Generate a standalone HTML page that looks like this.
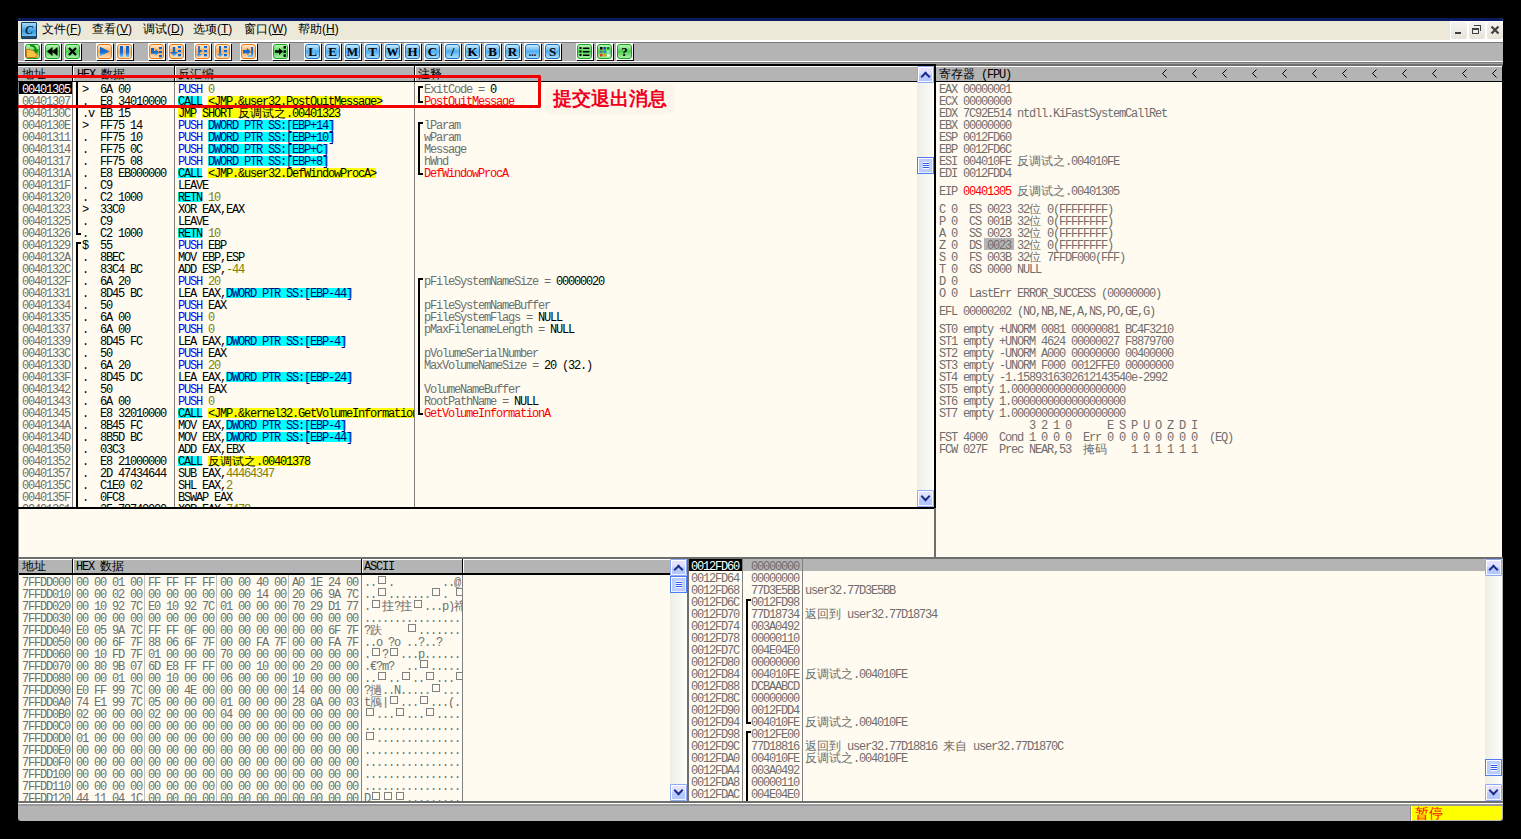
<!DOCTYPE html><html><head><meta charset="utf-8"><style>
html,body{margin:0;padding:0;width:1521px;height:839px;overflow:hidden;background:#000;}
div{position:absolute;box-sizing:content-box;}
.t{position:absolute;font:12px/12px "Liberation Mono",monospace;letter-spacing:-1.2px;white-space:pre;color:#000;}
.t i{font-style:normal;letter-spacing:0;}
.bx{display:inline-block;width:12px;height:8px;position:relative;vertical-align:top;}
.bx::after{content:"";position:absolute;left:2px;top:-1px;width:6px;height:6px;border:1px solid #808080;}
.icon{width:16px;height:17px;border-radius:1px;background:linear-gradient(#A8DCF8,#3A9AE0 55%,#70C0F0 85%,#2A4A6A 88%,#2A4A6A);border:1px solid #0A3C6A;box-sizing:border-box;}
.icon::after{content:"C";position:absolute;left:3px;top:0px;font:italic bold 12px/14px "Liberation Serif";color:#0A2A4A;}
.menu{font:12px/14px "Liberation Sans",sans-serif;color:#000;white-space:pre;}
.wbtn{width:16px;height:17px;background:linear-gradient(#F4F3EE,#E6E4DA);border-radius:2px;}
.wx{font:bold 12px/18px "Liberation Sans";color:#505050;}
.tb{width:17px;height:17px;box-sizing:border-box;border-radius:3px;text-align:center;font:12px/17px "Liberation Sans";color:#000;box-shadow:1px 1px 0 #000, -1px -1px 0 #FFF;}
.tb.g{background:linear-gradient(#9AF09A,#3CC83C 50%,#9AE89A);border:1px solid #28A028;}
.tb.o{background:linear-gradient(#FFE8C8,#FAB070 60%,#FFD8A8);border:1px solid #E88A3A;}
.tb.b{background:linear-gradient(#D0ECFF,#58B4F0 55%,#A8DCFF);border:1px solid #3A8AD0;}
.strack{background:linear-gradient(90deg,#EEEDE5,#FDFDFA);}
.sbtn{width:17px;height:17px;box-sizing:border-box;border:1px solid #8EAAF6;border-radius:1px;box-shadow:inset 1px 1px 0 #FFF,inset -1px -1px 0 #F4F6FF;background:linear-gradient(#E8E6FF,#DCDCFE 45%,#B8CAFB 52%,#B4C6FA);}
.up::after{content:"";position:absolute;left:4px;top:6px;width:5px;height:5px;border-left:2px solid #1C2E8C;border-top:2px solid #1C2E8C;transform:rotate(45deg);}
.dn::after{content:"";position:absolute;left:4px;top:2px;width:5px;height:5px;border-right:2px solid #1C2E8C;border-bottom:2px solid #1C2E8C;transform:rotate(45deg);}
.grip{position:absolute;left:-1px;top:-1px;width:17px;height:17px;box-sizing:border-box;border:1px solid #4C7CF6;background:radial-gradient(#C8D8FE,#B0C6FC);box-shadow:inset 1px 1px 0 #FFF,inset -1px -1px 0 #E8EEFF;}
.grip::after{content:"";position:absolute;left:5px;top:4px;width:6px;height:7px;background:repeating-linear-gradient(#FFFFFF 0 1px,#2E58F0 1px 2px);}
.st{font:14px/14px "Liberation Sans";color:#FF0000;}
.note{font:bold 18.5px/20px "Liberation Sans",sans-serif;color:#F00020;}
</style></head><body>
<div style="left:18px;top:18px;width:1485px;height:803px;background:#B4B4B4;border-radius:3px"></div>
<div style="left:18px;top:18px;width:1485px;height:3px;background:#0A1A60;border-radius:3px 3px 0 0"></div>
<div style="left:18px;top:21px;width:1485px;height:19px;background:#ECE9D8;"></div>
<div style="left:18px;top:40px;width:1485px;height:2px;background:#FFFFFF;"></div>
<div style="left:18px;top:42px;width:1485px;height:1px;background:#7A7A7A;"></div>
<div style="left:18px;top:43px;width:1485px;height:18px;background:#B4B4B4;"></div>
<div style="left:18px;top:61px;width:1485px;height:1px;background:#FFFFFF;"></div>
<div style="left:18px;top:62px;width:1485px;height:1px;background:#7A7A7A;"></div>
<div style="left:18px;top:63px;width:1485px;height:1px;background:#A0A0A0;"></div>
<div style="left:18px;top:64px;width:918px;height:2px;background:#000000;"></div>
<div style="left:936px;top:64px;width:567px;height:2px;background:#707070;"></div>
<div class="icon" style="left:21px;top:22px"></div>
<div class="menu" style="left:42px;top:22px">文件(<u>F</u>)</div>
<div class="menu" style="left:92px;top:22px">查看(<u>V</u>)</div>
<div class="menu" style="left:143px;top:22px">调试(<u>D</u>)</div>
<div class="menu" style="left:193px;top:22px">选项(<u>T</u>)</div>
<div class="menu" style="left:244px;top:22px">窗口(<u>W</u>)</div>
<div class="menu" style="left:298px;top:22px">帮助(<u>H</u>)</div>
<div style="left:1450px;top:21px;width:53px;height:21px;background:#FFFFFF;"></div>
<div class="wbtn" style="left:1451px;top:22px"></div>
<div class="wbtn" style="left:1469px;top:22px"></div>
<div class="wbtn" style="left:1487px;top:22px"></div>
<div style="left:1455px;top:32px;width:6px;height:2px;background:#404040;"></div>
<div style="left:1474px;top:25px;width:7px;height:6px;border-top:1px solid #404040;border-right:1px solid #404040;box-sizing:border-box"></div>
<div style="left:1472px;top:28px;width:7px;height:6px;border:1px solid #404040;border-top-width:2px;box-sizing:border-box;background:#EEEDE5"></div>
<svg style="position:absolute;left:1490px;top:25px" width="10" height="10"><path d="M1.5 1.5L8.5 8.5M8.5 1.5L1.5 8.5" stroke="#404040" stroke-width="2.2"/></svg>
<svg width="0" height="0" style="position:absolute"><defs>
<linearGradient id="gG" x1="0" y1="0" x2="0" y2="1"><stop offset="0" stop-color="#C8F8C8"/><stop offset="0.5" stop-color="#4CD04C"/><stop offset="1" stop-color="#B8F0B8"/></linearGradient>
<linearGradient id="gO" x1="0" y1="0" x2="0" y2="1"><stop offset="0" stop-color="#FFF2E0"/><stop offset="0.5" stop-color="#FFA850"/><stop offset="1" stop-color="#FFE4C4"/></linearGradient>
<linearGradient id="gB" x1="0" y1="0" x2="0" y2="1"><stop offset="0" stop-color="#D8F0FF"/><stop offset="0.5" stop-color="#4EAEF0"/><stop offset="1" stop-color="#B8E2FA"/></linearGradient>
<linearGradient id="bl" x1="0" y1="0" x2="0" y2="1"><stop offset="0" stop-color="#0A5CC0"/><stop offset="0.6" stop-color="#1A70D0"/><stop offset="1" stop-color="#70D0FF"/></linearGradient>
</defs></svg>
<div style="left:24px;top:43px;width:17px;height:17px;background:#FFFFFF;"></div>
<div style="left:41px;top:44px;width:1px;height:17px;background:#000000;"></div>
<div style="left:25px;top:60px;width:17px;height:1px;background:#000000;"></div>
<svg style="position:absolute;left:25px;top:44px" width="15" height="15" viewBox="0 0 15 15"><rect x="0.5" y="0.5" width="14" height="14" rx="2.5" fill="url(#gG)" stroke="#10A810"/><path d="M1.5 5.5h4l1 1h4v1.5h2.5l-1.8 5.5h-9.7z" fill="#F6C040" stroke="#C87010" stroke-width="0.9"/><path d="M5 1.5C8.5 1 10.5 3 11 6.5" stroke="#0C8A0C" stroke-width="2" fill="none"/><path d="M8 5.5L13.8 5.5L11 10z" fill="#0C8A0C"/></svg>
<div style="left:44px;top:43px;width:17px;height:17px;background:#FFFFFF;"></div>
<div style="left:61px;top:44px;width:1px;height:17px;background:#000000;"></div>
<div style="left:45px;top:60px;width:17px;height:1px;background:#000000;"></div>
<svg style="position:absolute;left:45px;top:44px" width="15" height="15" viewBox="0 0 15 15"><rect x="0.5" y="0.5" width="14" height="14" rx="2.5" fill="url(#gG)" stroke="#10A810"/><path d="M7.5 3L2 7.5L7.5 12z M12.5 3L7 7.5L12.5 12z" fill="#000"/></svg>
<div style="left:64px;top:43px;width:17px;height:17px;background:#FFFFFF;"></div>
<div style="left:81px;top:44px;width:1px;height:17px;background:#000000;"></div>
<div style="left:65px;top:60px;width:17px;height:1px;background:#000000;"></div>
<svg style="position:absolute;left:65px;top:44px" width="15" height="15" viewBox="0 0 15 15"><rect x="0.5" y="0.5" width="14" height="14" rx="2.5" fill="url(#gG)" stroke="#10A810"/><path d="M4 4L11 11M11 4L4 11" stroke="#000" stroke-width="2.2"/></svg>
<div style="left:96px;top:43px;width:17px;height:17px;background:#FFFFFF;"></div>
<div style="left:113px;top:44px;width:1px;height:17px;background:#000000;"></div>
<div style="left:97px;top:60px;width:17px;height:1px;background:#000000;"></div>
<svg style="position:absolute;left:97px;top:44px" width="15" height="15" viewBox="0 0 15 15"><rect x="0.5" y="0.5" width="14" height="14" rx="2.5" fill="url(#gO)" stroke="#F07810"/><path d="M3 2.8L3 12.2L12.5 7.5z" fill="url(#bl)"/></svg>
<div style="left:116px;top:43px;width:17px;height:17px;background:#FFFFFF;"></div>
<div style="left:133px;top:44px;width:1px;height:17px;background:#000000;"></div>
<div style="left:117px;top:60px;width:17px;height:1px;background:#000000;"></div>
<svg style="position:absolute;left:117px;top:44px" width="15" height="15" viewBox="0 0 15 15"><rect x="0.5" y="0.5" width="14" height="14" rx="2.5" fill="url(#gO)" stroke="#F07810"/><rect x="3" y="2" width="3" height="11" fill="url(#bl)"/><rect x="9" y="2" width="3" height="11" fill="url(#bl)"/></svg>
<div style="left:148px;top:43px;width:17px;height:17px;background:#FFFFFF;"></div>
<div style="left:165px;top:44px;width:1px;height:17px;background:#000000;"></div>
<div style="left:149px;top:60px;width:17px;height:1px;background:#000000;"></div>
<svg style="position:absolute;left:149px;top:44px" width="15" height="15" viewBox="0 0 15 15"><rect x="0.5" y="0.5" width="14" height="14" rx="2.5" fill="url(#gO)" stroke="#F07810"/><path d="M2 4h3v3h1.5v-2l3.5 3.5l-3.5 3.5v-2h-4.5z" fill="url(#bl)"/><rect x="10" y="3" width="3" height="2.7" fill="url(#bl)"/><rect x="10" y="7" width="3" height="2.7" fill="url(#bl)"/><rect x="10" y="11" width="3" height="2.7" fill="url(#bl)"/></svg>
<div style="left:168px;top:43px;width:17px;height:17px;background:#FFFFFF;"></div>
<div style="left:185px;top:44px;width:1px;height:17px;background:#000000;"></div>
<div style="left:169px;top:60px;width:17px;height:1px;background:#000000;"></div>
<svg style="position:absolute;left:169px;top:44px" width="15" height="15" viewBox="0 0 15 15"><rect x="0.5" y="0.5" width="14" height="14" rx="2.5" fill="url(#gO)" stroke="#F07810"/><path d="M3.8 3h2.4v5h2.8l-4 4.5l-4-4.5h2.8z" fill="url(#bl)"/><rect x="9" y="2" width="3" height="2.5" fill="url(#bl)"/><rect x="9" y="6" width="3" height="2.7" fill="url(#bl)"/><rect x="9" y="10" width="3" height="2.7" fill="url(#bl)"/></svg>
<div style="left:194px;top:43px;width:17px;height:17px;background:#FFFFFF;"></div>
<div style="left:211px;top:44px;width:1px;height:17px;background:#000000;"></div>
<div style="left:195px;top:60px;width:17px;height:1px;background:#000000;"></div>
<svg style="position:absolute;left:195px;top:44px" width="15" height="15" viewBox="0 0 15 15"><rect x="0.5" y="0.5" width="14" height="14" rx="2.5" fill="url(#gO)" stroke="#F07810"/><path d="M3.2 2h1.6v3.5l3 1.6l-3 1.6v1.3h2.2l-3 3.2l-3-3.2h2.2z" fill="url(#bl)"/><rect x="9" y="2" width="3" height="2.5" fill="url(#bl)"/><rect x="9" y="6" width="3" height="2.7" fill="url(#bl)"/><rect x="9" y="10" width="3" height="2.7" fill="url(#bl)"/></svg>
<div style="left:214px;top:43px;width:17px;height:17px;background:#FFFFFF;"></div>
<div style="left:231px;top:44px;width:1px;height:17px;background:#000000;"></div>
<div style="left:215px;top:60px;width:17px;height:1px;background:#000000;"></div>
<svg style="position:absolute;left:215px;top:44px" width="15" height="15" viewBox="0 0 15 15"><rect x="0.5" y="0.5" width="14" height="14" rx="2.5" fill="url(#gO)" stroke="#F07810"/><path d="M4 2h2v8h2l-3 3.3l-3-3.3h2z" fill="url(#bl)"/><rect x="9" y="2" width="3" height="2.5" fill="url(#bl)"/><rect x="9" y="6" width="3" height="2.7" fill="url(#bl)"/><rect x="9" y="10" width="3" height="2.7" fill="url(#bl)"/></svg>
<div style="left:240px;top:43px;width:17px;height:17px;background:#FFFFFF;"></div>
<div style="left:257px;top:44px;width:1px;height:17px;background:#000000;"></div>
<div style="left:241px;top:60px;width:17px;height:1px;background:#000000;"></div>
<svg style="position:absolute;left:241px;top:44px" width="15" height="15" viewBox="0 0 15 15"><rect x="0.5" y="0.5" width="14" height="14" rx="2.5" fill="url(#gO)" stroke="#F07810"/><path d="M2 6h4v-2l3.8 3.8l-3.8 3.8v-2h-4z" fill="url(#bl)"/><path d="M10.2 3h1.8v10h-5v-1.8h3.2z" fill="url(#bl)"/></svg>
<div style="left:272px;top:43px;width:17px;height:17px;background:#FFFFFF;"></div>
<div style="left:289px;top:44px;width:1px;height:17px;background:#000000;"></div>
<div style="left:273px;top:60px;width:17px;height:1px;background:#000000;"></div>
<svg style="position:absolute;left:273px;top:44px" width="15" height="15" viewBox="0 0 15 15"><rect x="0.5" y="0.5" width="14" height="14" rx="2.5" fill="url(#gG)" stroke="#10A810"/><path d="M2 6.2h4v-2.2l4 3.5l-4 3.5v-2.2h-4z" fill="#000"/><rect x="10.5" y="2" width="2.4" height="2.6" fill="#000"/><rect x="10.5" y="6.3" width="2.4" height="2.6" fill="#000"/><rect x="10.5" y="10.3" width="2.4" height="2.6" fill="#000"/></svg>
<div style="left:304px;top:43px;width:17px;height:17px;background:#FFFFFF;"></div>
<div style="left:321px;top:44px;width:1px;height:17px;background:#000000;"></div>
<div style="left:305px;top:60px;width:17px;height:1px;background:#000000;"></div>
<svg style="position:absolute;left:305px;top:44px" width="15" height="15" viewBox="0 0 15 15"><rect x="0.5" y="0.5" width="14" height="14" rx="2.5" fill="url(#gB)" stroke="#1670C8"/><text x="7.5" y="12" text-anchor="middle" font-family="Liberation Serif" font-weight="bold" font-size="13" fill="#000">L</text></svg>
<div style="left:324px;top:43px;width:17px;height:17px;background:#FFFFFF;"></div>
<div style="left:341px;top:44px;width:1px;height:17px;background:#000000;"></div>
<div style="left:325px;top:60px;width:17px;height:1px;background:#000000;"></div>
<svg style="position:absolute;left:325px;top:44px" width="15" height="15" viewBox="0 0 15 15"><rect x="0.5" y="0.5" width="14" height="14" rx="2.5" fill="url(#gB)" stroke="#1670C8"/><text x="7.5" y="12" text-anchor="middle" font-family="Liberation Serif" font-weight="bold" font-size="13" fill="#000">E</text></svg>
<div style="left:344px;top:43px;width:17px;height:17px;background:#FFFFFF;"></div>
<div style="left:361px;top:44px;width:1px;height:17px;background:#000000;"></div>
<div style="left:345px;top:60px;width:17px;height:1px;background:#000000;"></div>
<svg style="position:absolute;left:345px;top:44px" width="15" height="15" viewBox="0 0 15 15"><rect x="0.5" y="0.5" width="14" height="14" rx="2.5" fill="url(#gB)" stroke="#1670C8"/><text x="7.5" y="12" text-anchor="middle" font-family="Liberation Serif" font-weight="bold" font-size="12" fill="#000">M</text></svg>
<div style="left:364px;top:43px;width:17px;height:17px;background:#FFFFFF;"></div>
<div style="left:381px;top:44px;width:1px;height:17px;background:#000000;"></div>
<div style="left:365px;top:60px;width:17px;height:1px;background:#000000;"></div>
<svg style="position:absolute;left:365px;top:44px" width="15" height="15" viewBox="0 0 15 15"><rect x="0.5" y="0.5" width="14" height="14" rx="2.5" fill="url(#gB)" stroke="#1670C8"/><text x="7.5" y="12" text-anchor="middle" font-family="Liberation Serif" font-weight="bold" font-size="13" fill="#000">T</text></svg>
<div style="left:384px;top:43px;width:17px;height:17px;background:#FFFFFF;"></div>
<div style="left:401px;top:44px;width:1px;height:17px;background:#000000;"></div>
<div style="left:385px;top:60px;width:17px;height:1px;background:#000000;"></div>
<svg style="position:absolute;left:385px;top:44px" width="15" height="15" viewBox="0 0 15 15"><rect x="0.5" y="0.5" width="14" height="14" rx="2.5" fill="url(#gB)" stroke="#1670C8"/><text x="7.5" y="12" text-anchor="middle" font-family="Liberation Serif" font-weight="bold" font-size="12" fill="#000">W</text></svg>
<div style="left:404px;top:43px;width:17px;height:17px;background:#FFFFFF;"></div>
<div style="left:421px;top:44px;width:1px;height:17px;background:#000000;"></div>
<div style="left:405px;top:60px;width:17px;height:1px;background:#000000;"></div>
<svg style="position:absolute;left:405px;top:44px" width="15" height="15" viewBox="0 0 15 15"><rect x="0.5" y="0.5" width="14" height="14" rx="2.5" fill="url(#gB)" stroke="#1670C8"/><text x="7.5" y="12" text-anchor="middle" font-family="Liberation Serif" font-weight="bold" font-size="13" fill="#000">H</text></svg>
<div style="left:424px;top:43px;width:17px;height:17px;background:#FFFFFF;"></div>
<div style="left:441px;top:44px;width:1px;height:17px;background:#000000;"></div>
<div style="left:425px;top:60px;width:17px;height:1px;background:#000000;"></div>
<svg style="position:absolute;left:425px;top:44px" width="15" height="15" viewBox="0 0 15 15"><rect x="0.5" y="0.5" width="14" height="14" rx="2.5" fill="url(#gB)" stroke="#1670C8"/><text x="7.5" y="12" text-anchor="middle" font-family="Liberation Serif" font-weight="bold" font-size="13" fill="#000">C</text></svg>
<div style="left:444px;top:43px;width:17px;height:17px;background:#FFFFFF;"></div>
<div style="left:461px;top:44px;width:1px;height:17px;background:#000000;"></div>
<div style="left:445px;top:60px;width:17px;height:1px;background:#000000;"></div>
<svg style="position:absolute;left:445px;top:44px" width="15" height="15" viewBox="0 0 15 15"><rect x="0.5" y="0.5" width="14" height="14" rx="2.5" fill="url(#gB)" stroke="#1670C8"/><text x="7.5" y="12" text-anchor="middle" font-family="Liberation Serif" font-weight="bold" font-size="13" fill="#000">/</text></svg>
<div style="left:464px;top:43px;width:17px;height:17px;background:#FFFFFF;"></div>
<div style="left:481px;top:44px;width:1px;height:17px;background:#000000;"></div>
<div style="left:465px;top:60px;width:17px;height:1px;background:#000000;"></div>
<svg style="position:absolute;left:465px;top:44px" width="15" height="15" viewBox="0 0 15 15"><rect x="0.5" y="0.5" width="14" height="14" rx="2.5" fill="url(#gB)" stroke="#1670C8"/><text x="7.5" y="12" text-anchor="middle" font-family="Liberation Serif" font-weight="bold" font-size="13" fill="#000">K</text></svg>
<div style="left:484px;top:43px;width:17px;height:17px;background:#FFFFFF;"></div>
<div style="left:501px;top:44px;width:1px;height:17px;background:#000000;"></div>
<div style="left:485px;top:60px;width:17px;height:1px;background:#000000;"></div>
<svg style="position:absolute;left:485px;top:44px" width="15" height="15" viewBox="0 0 15 15"><rect x="0.5" y="0.5" width="14" height="14" rx="2.5" fill="url(#gB)" stroke="#1670C8"/><text x="7.5" y="12" text-anchor="middle" font-family="Liberation Serif" font-weight="bold" font-size="13" fill="#000">B</text></svg>
<div style="left:504px;top:43px;width:17px;height:17px;background:#FFFFFF;"></div>
<div style="left:521px;top:44px;width:1px;height:17px;background:#000000;"></div>
<div style="left:505px;top:60px;width:17px;height:1px;background:#000000;"></div>
<svg style="position:absolute;left:505px;top:44px" width="15" height="15" viewBox="0 0 15 15"><rect x="0.5" y="0.5" width="14" height="14" rx="2.5" fill="url(#gB)" stroke="#1670C8"/><text x="7.5" y="12" text-anchor="middle" font-family="Liberation Serif" font-weight="bold" font-size="13" fill="#000">R</text></svg>
<div style="left:524px;top:43px;width:17px;height:17px;background:#FFFFFF;"></div>
<div style="left:541px;top:44px;width:1px;height:17px;background:#000000;"></div>
<div style="left:525px;top:60px;width:17px;height:1px;background:#000000;"></div>
<svg style="position:absolute;left:525px;top:44px" width="15" height="15" viewBox="0 0 15 15"><rect x="0.5" y="0.5" width="14" height="14" rx="2.5" fill="url(#gB)" stroke="#1670C8"/><text x="7.5" y="12" text-anchor="middle" font-family="Liberation Serif" font-weight="bold" font-size="10" fill="#000">...</text></svg>
<div style="left:544px;top:43px;width:17px;height:17px;background:#FFFFFF;"></div>
<div style="left:561px;top:44px;width:1px;height:17px;background:#000000;"></div>
<div style="left:545px;top:60px;width:17px;height:1px;background:#000000;"></div>
<svg style="position:absolute;left:545px;top:44px" width="15" height="15" viewBox="0 0 15 15"><rect x="0.5" y="0.5" width="14" height="14" rx="2.5" fill="url(#gB)" stroke="#1670C8"/><text x="7.5" y="12" text-anchor="middle" font-family="Liberation Serif" font-weight="bold" font-size="13" fill="#000">S</text></svg>
<div style="left:576px;top:43px;width:17px;height:17px;background:#FFFFFF;"></div>
<div style="left:593px;top:44px;width:1px;height:17px;background:#000000;"></div>
<div style="left:577px;top:60px;width:17px;height:1px;background:#000000;"></div>
<svg style="position:absolute;left:577px;top:44px" width="15" height="15" viewBox="0 0 15 15"><rect x="0.5" y="0.5" width="14" height="14" rx="2.5" fill="url(#gG)" stroke="#10A810"/><rect x="2.5" y="3" width="2" height="2" fill="#000"/><rect x="2.5" y="6.5" width="2" height="2" fill="#000"/><rect x="2.5" y="10" width="2" height="2" fill="#000"/><rect x="6" y="3.5" width="6.5" height="1.5" fill="#000"/><rect x="6" y="7" width="6.5" height="1.5" fill="#000"/><rect x="6" y="10.5" width="6.5" height="1.5" fill="#000"/></svg>
<div style="left:596px;top:43px;width:17px;height:17px;background:#FFFFFF;"></div>
<div style="left:613px;top:44px;width:1px;height:17px;background:#000000;"></div>
<div style="left:597px;top:60px;width:17px;height:1px;background:#000000;"></div>
<svg style="position:absolute;left:597px;top:44px" width="15" height="15" viewBox="0 0 15 15"><rect x="0.5" y="0.5" width="14" height="14" rx="2.5" fill="url(#gG)" stroke="#10A810"/><rect x="3.0" y="3.0" width="2.5" height="2.5" fill="#000000"/><rect x="6.5" y="3.0" width="2.5" height="2.5" fill="#1040C0"/><rect x="10.0" y="3.0" width="2.5" height="2.5" fill="#108010"/><rect x="3.0" y="6.5" width="2.5" height="2.5" fill="#707070"/><rect x="6.5" y="6.5" width="2.5" height="2.5" fill="#2080F0"/><rect x="10.0" y="6.5" width="2.5" height="2.5" fill="#A0E0FF"/><rect x="3.0" y="10.0" width="2.5" height="2.5" fill="#F03010"/><rect x="6.5" y="10.0" width="2.5" height="2.5" fill="#F09010"/><rect x="10.0" y="10.0" width="2.5" height="2.5" fill="#FFFFFF"/></svg>
<div style="left:616px;top:43px;width:17px;height:17px;background:#FFFFFF;"></div>
<div style="left:633px;top:44px;width:1px;height:17px;background:#000000;"></div>
<div style="left:617px;top:60px;width:17px;height:1px;background:#000000;"></div>
<svg style="position:absolute;left:617px;top:44px" width="15" height="15" viewBox="0 0 15 15"><rect x="0.5" y="0.5" width="14" height="14" rx="2.5" fill="url(#gG)" stroke="#10A810"/><text x="7.5" y="12" text-anchor="middle" font-family="Liberation Serif" font-weight="bold" font-size="13" fill="#000">?</text></svg>
<div style="left:18px;top:66px;width:916px;height:441px;background:#FFFBF0;"></div>
<div style="left:18px;top:66px;width:899px;height:1px;background:#FFFFFF;"></div>
<div style="left:18px;top:67px;width:899px;height:14px;background:#B4B4B4;"></div>
<div style="left:18px;top:81px;width:899px;height:1px;background:#000000;"></div>
<div style="left:72px;top:66px;width:1px;height:16px;background:#000000;"></div>
<div style="left:73px;top:66px;width:1px;height:15px;background:#FFFFFF;"></div>
<div style="left:174px;top:66px;width:1px;height:16px;background:#000000;"></div>
<div style="left:175px;top:66px;width:1px;height:15px;background:#FFFFFF;"></div>
<div style="left:414px;top:66px;width:1px;height:16px;background:#000000;"></div>
<div style="left:415px;top:66px;width:1px;height:15px;background:#FFFFFF;"></div>
<div class="t" style="left:22px;top:69px;"><i>地址</i></div>
<div class="t" style="left:77px;top:69px;">HEX <i>数据</i></div>
<div class="t" style="left:178px;top:69px;"><i>反汇编</i></div>
<div class="t" style="left:418px;top:69px;"><i>注释</i></div>
<div style="left:72px;top:82px;width:1px;height:425px;background:#808080;"></div>
<div style="left:174px;top:82px;width:1px;height:425px;background:#808080;"></div>
<div style="left:414px;top:82px;width:1px;height:425px;background:#808080;"></div>
<div style="left:18px;top:82px;width:1px;height:425px;background:#808080;"></div>
<div style="left:19px;top:82px;width:898px;height:425px;overflow:hidden">
<div style="left:0px;top:0px;width:53px;height:12px;background:#000"></div>
<div class="t" style="left:3px;top:2px;color:#FFFFFF;">00401305</div>
<div class="t" style="left:63px;top:2px;">&gt;  6A 00</div>
<div style="left:156px;top:2px;width:239px;height:12px;overflow:hidden;position:absolute">
<div class="t" style="left:3px;top:0px;"><span style="color:#0000FF">PUSH</span> <span style="color:#808000">0</span></div>
</div>
<div class="t" style="left:405px;top:2px;"><span style="color:#6E6E6E">ExitCode = </span>0</div>
<div class="t" style="left:3px;top:14px;color:#6E6E6E;">00401307</div>
<div class="t" style="left:63px;top:14px;">.  E8 34010000</div>
<div style="left:156px;top:14px;width:239px;height:12px;overflow:hidden;position:absolute">
<div class="t" style="left:3px;top:0px;"><span style="background:#00FFFF;display:inline-block;vertical-align:top;position:relative;top:-2px;padding-top:2px;height:10px">CALL</span> <span style="background:#FFFF00;display:inline-block;vertical-align:top;position:relative;top:-2px;padding-top:2px;height:10px">&lt;JMP.&amp;user32.PostQuitMessage&gt;</span></div>
</div>
<div class="t" style="left:405px;top:14px;"><span style="color:#FF0000">PostQuitMessage</span></div>
<div class="t" style="left:3px;top:26px;color:#6E6E6E;">0040130C</div>
<div class="t" style="left:63px;top:26px;">.v EB 15</div>
<div style="left:156px;top:26px;width:239px;height:12px;overflow:hidden;position:absolute">
<div class="t" style="left:3px;top:0px;"><span style="background:#FFFF00;display:inline-block;vertical-align:top;position:relative;top:-2px;padding-top:2px;height:10px">JMP</span> <span style="background:#FFFF00;display:inline-block;vertical-align:top;position:relative;top:-2px;padding-top:2px;height:10px">SHORT <i>反调试之</i>.00401323</span></div>
</div>
<div class="t" style="left:3px;top:38px;color:#6E6E6E;">0040130E</div>
<div class="t" style="left:63px;top:38px;">&gt;  FF75 14</div>
<div style="left:156px;top:38px;width:239px;height:12px;overflow:hidden;position:absolute">
<div class="t" style="left:3px;top:0px;"><span style="color:#0000FF">PUSH</span> <span style="color:#000080;background:#00FFFF;display:inline-block;vertical-align:top;position:relative;top:-2px;padding-top:2px;height:10px">DWORD PTR SS:[EBP+14]</span></div>
</div>
<div class="t" style="left:405px;top:38px;"><span style="color:#6E6E6E">lParam</span></div>
<div class="t" style="left:3px;top:50px;color:#6E6E6E;">00401311</div>
<div class="t" style="left:63px;top:50px;">.  FF75 10</div>
<div style="left:156px;top:50px;width:239px;height:12px;overflow:hidden;position:absolute">
<div class="t" style="left:3px;top:0px;"><span style="color:#0000FF">PUSH</span> <span style="color:#000080;background:#00FFFF;display:inline-block;vertical-align:top;position:relative;top:-2px;padding-top:2px;height:10px">DWORD PTR SS:[EBP+10]</span></div>
</div>
<div class="t" style="left:405px;top:50px;"><span style="color:#6E6E6E">wParam</span></div>
<div class="t" style="left:3px;top:62px;color:#6E6E6E;">00401314</div>
<div class="t" style="left:63px;top:62px;">.  FF75 0C</div>
<div style="left:156px;top:62px;width:239px;height:12px;overflow:hidden;position:absolute">
<div class="t" style="left:3px;top:0px;"><span style="color:#0000FF">PUSH</span> <span style="color:#000080;background:#00FFFF;display:inline-block;vertical-align:top;position:relative;top:-2px;padding-top:2px;height:10px">DWORD PTR SS:[EBP+C]</span></div>
</div>
<div class="t" style="left:405px;top:62px;"><span style="color:#6E6E6E">Message</span></div>
<div class="t" style="left:3px;top:74px;color:#6E6E6E;">00401317</div>
<div class="t" style="left:63px;top:74px;">.  FF75 08</div>
<div style="left:156px;top:74px;width:239px;height:12px;overflow:hidden;position:absolute">
<div class="t" style="left:3px;top:0px;"><span style="color:#0000FF">PUSH</span> <span style="color:#000080;background:#00FFFF;display:inline-block;vertical-align:top;position:relative;top:-2px;padding-top:2px;height:10px">DWORD PTR SS:[EBP+8]</span></div>
</div>
<div class="t" style="left:405px;top:74px;"><span style="color:#6E6E6E">hWnd</span></div>
<div class="t" style="left:3px;top:86px;color:#6E6E6E;">0040131A</div>
<div class="t" style="left:63px;top:86px;">.  E8 EB000000</div>
<div style="left:156px;top:86px;width:239px;height:12px;overflow:hidden;position:absolute">
<div class="t" style="left:3px;top:0px;"><span style="background:#00FFFF;display:inline-block;vertical-align:top;position:relative;top:-2px;padding-top:2px;height:10px">CALL</span> <span style="background:#FFFF00;display:inline-block;vertical-align:top;position:relative;top:-2px;padding-top:2px;height:10px">&lt;JMP.&amp;user32.DefWindowProcA&gt;</span></div>
</div>
<div class="t" style="left:405px;top:86px;"><span style="color:#FF0000">DefWindowProcA</span></div>
<div class="t" style="left:3px;top:98px;color:#6E6E6E;">0040131F</div>
<div class="t" style="left:63px;top:98px;">.  C9</div>
<div style="left:156px;top:98px;width:239px;height:12px;overflow:hidden;position:absolute">
<div class="t" style="left:3px;top:0px;">LEAVE</div>
</div>
<div class="t" style="left:3px;top:110px;color:#6E6E6E;">00401320</div>
<div class="t" style="left:63px;top:110px;">.  C2 1000</div>
<div style="left:156px;top:110px;width:239px;height:12px;overflow:hidden;position:absolute">
<div class="t" style="left:3px;top:0px;"><span style="background:#00FFFF;display:inline-block;vertical-align:top;position:relative;top:-2px;padding-top:2px;height:10px">RETN</span> <span style="color:#808000">10</span></div>
</div>
<div class="t" style="left:3px;top:122px;color:#6E6E6E;">00401323</div>
<div class="t" style="left:63px;top:122px;">&gt;  33C0</div>
<div style="left:156px;top:122px;width:239px;height:12px;overflow:hidden;position:absolute">
<div class="t" style="left:3px;top:0px;">XOR EAX,EAX</div>
</div>
<div class="t" style="left:3px;top:134px;color:#6E6E6E;">00401325</div>
<div class="t" style="left:63px;top:134px;">.  C9</div>
<div style="left:156px;top:134px;width:239px;height:12px;overflow:hidden;position:absolute">
<div class="t" style="left:3px;top:0px;">LEAVE</div>
</div>
<div class="t" style="left:3px;top:146px;color:#6E6E6E;">00401326</div>
<div class="t" style="left:63px;top:146px;">.  C2 1000</div>
<div style="left:156px;top:146px;width:239px;height:12px;overflow:hidden;position:absolute">
<div class="t" style="left:3px;top:0px;"><span style="background:#00FFFF;display:inline-block;vertical-align:top;position:relative;top:-2px;padding-top:2px;height:10px">RETN</span> <span style="color:#808000">10</span></div>
</div>
<div class="t" style="left:3px;top:158px;color:#6E6E6E;">00401329</div>
<div class="t" style="left:63px;top:158px;">$  55</div>
<div style="left:156px;top:158px;width:239px;height:12px;overflow:hidden;position:absolute">
<div class="t" style="left:3px;top:0px;"><span style="color:#0000FF">PUSH</span> EBP</div>
</div>
<div class="t" style="left:3px;top:170px;color:#6E6E6E;">0040132A</div>
<div class="t" style="left:63px;top:170px;">.  8BEC</div>
<div style="left:156px;top:170px;width:239px;height:12px;overflow:hidden;position:absolute">
<div class="t" style="left:3px;top:0px;">MOV EBP,ESP</div>
</div>
<div class="t" style="left:3px;top:182px;color:#6E6E6E;">0040132C</div>
<div class="t" style="left:63px;top:182px;">.  83C4 BC</div>
<div style="left:156px;top:182px;width:239px;height:12px;overflow:hidden;position:absolute">
<div class="t" style="left:3px;top:0px;">ADD ESP,<span style="color:#808000">-44</span></div>
</div>
<div class="t" style="left:3px;top:194px;color:#6E6E6E;">0040132F</div>
<div class="t" style="left:63px;top:194px;">.  6A 20</div>
<div style="left:156px;top:194px;width:239px;height:12px;overflow:hidden;position:absolute">
<div class="t" style="left:3px;top:0px;"><span style="color:#0000FF">PUSH</span> <span style="color:#808000">20</span></div>
</div>
<div class="t" style="left:405px;top:194px;"><span style="color:#6E6E6E">pFileSystemNameSize = </span>00000020</div>
<div class="t" style="left:3px;top:206px;color:#6E6E6E;">00401331</div>
<div class="t" style="left:63px;top:206px;">.  8D45 BC</div>
<div style="left:156px;top:206px;width:239px;height:12px;overflow:hidden;position:absolute">
<div class="t" style="left:3px;top:0px;">LEA EAX,<span style="color:#000080;background:#00FFFF;display:inline-block;vertical-align:top;position:relative;top:-2px;padding-top:2px;height:10px">DWORD PTR SS:[EBP-44]</span></div>
</div>
<div class="t" style="left:3px;top:218px;color:#6E6E6E;">00401334</div>
<div class="t" style="left:63px;top:218px;">.  50</div>
<div style="left:156px;top:218px;width:239px;height:12px;overflow:hidden;position:absolute">
<div class="t" style="left:3px;top:0px;"><span style="color:#0000FF">PUSH</span> EAX</div>
</div>
<div class="t" style="left:405px;top:218px;"><span style="color:#6E6E6E">pFileSystemNameBuffer</span></div>
<div class="t" style="left:3px;top:230px;color:#6E6E6E;">00401335</div>
<div class="t" style="left:63px;top:230px;">.  6A 00</div>
<div style="left:156px;top:230px;width:239px;height:12px;overflow:hidden;position:absolute">
<div class="t" style="left:3px;top:0px;"><span style="color:#0000FF">PUSH</span> <span style="color:#808000">0</span></div>
</div>
<div class="t" style="left:405px;top:230px;"><span style="color:#6E6E6E">pFileSystemFlags = </span>NULL</div>
<div class="t" style="left:3px;top:242px;color:#6E6E6E;">00401337</div>
<div class="t" style="left:63px;top:242px;">.  6A 00</div>
<div style="left:156px;top:242px;width:239px;height:12px;overflow:hidden;position:absolute">
<div class="t" style="left:3px;top:0px;"><span style="color:#0000FF">PUSH</span> <span style="color:#808000">0</span></div>
</div>
<div class="t" style="left:405px;top:242px;"><span style="color:#6E6E6E">pMaxFilenameLength = </span>NULL</div>
<div class="t" style="left:3px;top:254px;color:#6E6E6E;">00401339</div>
<div class="t" style="left:63px;top:254px;">.  8D45 FC</div>
<div style="left:156px;top:254px;width:239px;height:12px;overflow:hidden;position:absolute">
<div class="t" style="left:3px;top:0px;">LEA EAX,<span style="color:#000080;background:#00FFFF;display:inline-block;vertical-align:top;position:relative;top:-2px;padding-top:2px;height:10px">DWORD PTR SS:[EBP-4]</span></div>
</div>
<div class="t" style="left:3px;top:266px;color:#6E6E6E;">0040133C</div>
<div class="t" style="left:63px;top:266px;">.  50</div>
<div style="left:156px;top:266px;width:239px;height:12px;overflow:hidden;position:absolute">
<div class="t" style="left:3px;top:0px;"><span style="color:#0000FF">PUSH</span> EAX</div>
</div>
<div class="t" style="left:405px;top:266px;"><span style="color:#6E6E6E">pVolumeSerialNumber</span></div>
<div class="t" style="left:3px;top:278px;color:#6E6E6E;">0040133D</div>
<div class="t" style="left:63px;top:278px;">.  6A 20</div>
<div style="left:156px;top:278px;width:239px;height:12px;overflow:hidden;position:absolute">
<div class="t" style="left:3px;top:0px;"><span style="color:#0000FF">PUSH</span> <span style="color:#808000">20</span></div>
</div>
<div class="t" style="left:405px;top:278px;"><span style="color:#6E6E6E">MaxVolumeNameSize = </span>20 (32.)</div>
<div class="t" style="left:3px;top:290px;color:#6E6E6E;">0040133F</div>
<div class="t" style="left:63px;top:290px;">.  8D45 DC</div>
<div style="left:156px;top:290px;width:239px;height:12px;overflow:hidden;position:absolute">
<div class="t" style="left:3px;top:0px;">LEA EAX,<span style="color:#000080;background:#00FFFF;display:inline-block;vertical-align:top;position:relative;top:-2px;padding-top:2px;height:10px">DWORD PTR SS:[EBP-24]</span></div>
</div>
<div class="t" style="left:3px;top:302px;color:#6E6E6E;">00401342</div>
<div class="t" style="left:63px;top:302px;">.  50</div>
<div style="left:156px;top:302px;width:239px;height:12px;overflow:hidden;position:absolute">
<div class="t" style="left:3px;top:0px;"><span style="color:#0000FF">PUSH</span> EAX</div>
</div>
<div class="t" style="left:405px;top:302px;"><span style="color:#6E6E6E">VolumeNameBuffer</span></div>
<div class="t" style="left:3px;top:314px;color:#6E6E6E;">00401343</div>
<div class="t" style="left:63px;top:314px;">.  6A 00</div>
<div style="left:156px;top:314px;width:239px;height:12px;overflow:hidden;position:absolute">
<div class="t" style="left:3px;top:0px;"><span style="color:#0000FF">PUSH</span> <span style="color:#808000">0</span></div>
</div>
<div class="t" style="left:405px;top:314px;"><span style="color:#6E6E6E">RootPathName = </span>NULL</div>
<div class="t" style="left:3px;top:326px;color:#6E6E6E;">00401345</div>
<div class="t" style="left:63px;top:326px;">.  E8 32010000</div>
<div style="left:156px;top:326px;width:239px;height:12px;overflow:hidden;position:absolute">
<div class="t" style="left:3px;top:0px;"><span style="background:#00FFFF;display:inline-block;vertical-align:top;position:relative;top:-2px;padding-top:2px;height:10px">CALL</span> <span style="background:#FFFF00;display:inline-block;vertical-align:top;position:relative;top:-2px;padding-top:2px;height:10px">&lt;JMP.&amp;kernel32.GetVolumeInformationA&gt;</span></div>
</div>
<div class="t" style="left:405px;top:326px;"><span style="color:#FF0000">GetVolumeInformationA</span></div>
<div class="t" style="left:3px;top:338px;color:#6E6E6E;">0040134A</div>
<div class="t" style="left:63px;top:338px;">.  8B45 FC</div>
<div style="left:156px;top:338px;width:239px;height:12px;overflow:hidden;position:absolute">
<div class="t" style="left:3px;top:0px;">MOV EAX,<span style="color:#000080;background:#00FFFF;display:inline-block;vertical-align:top;position:relative;top:-2px;padding-top:2px;height:10px">DWORD PTR SS:[EBP-4]</span></div>
</div>
<div class="t" style="left:3px;top:350px;color:#6E6E6E;">0040134D</div>
<div class="t" style="left:63px;top:350px;">.  8B5D BC</div>
<div style="left:156px;top:350px;width:239px;height:12px;overflow:hidden;position:absolute">
<div class="t" style="left:3px;top:0px;">MOV EBX,<span style="color:#000080;background:#00FFFF;display:inline-block;vertical-align:top;position:relative;top:-2px;padding-top:2px;height:10px">DWORD PTR SS:[EBP-44]</span></div>
</div>
<div class="t" style="left:3px;top:362px;color:#6E6E6E;">00401350</div>
<div class="t" style="left:63px;top:362px;">.  03C3</div>
<div style="left:156px;top:362px;width:239px;height:12px;overflow:hidden;position:absolute">
<div class="t" style="left:3px;top:0px;">ADD EAX,EBX</div>
</div>
<div class="t" style="left:3px;top:374px;color:#6E6E6E;">00401352</div>
<div class="t" style="left:63px;top:374px;">.  E8 21000000</div>
<div style="left:156px;top:374px;width:239px;height:12px;overflow:hidden;position:absolute">
<div class="t" style="left:3px;top:0px;"><span style="background:#00FFFF;display:inline-block;vertical-align:top;position:relative;top:-2px;padding-top:2px;height:10px">CALL</span> <span style="background:#FFFF00;display:inline-block;vertical-align:top;position:relative;top:-2px;padding-top:2px;height:10px"><i>反调试之</i>.00401378</span></div>
</div>
<div class="t" style="left:3px;top:386px;color:#6E6E6E;">00401357</div>
<div class="t" style="left:63px;top:386px;">.  2D 47434644</div>
<div style="left:156px;top:386px;width:239px;height:12px;overflow:hidden;position:absolute">
<div class="t" style="left:3px;top:0px;">SUB EAX,<span style="color:#808000">44464347</span></div>
</div>
<div class="t" style="left:3px;top:398px;color:#6E6E6E;">0040135C</div>
<div class="t" style="left:63px;top:398px;">.  C1E0 02</div>
<div style="left:156px;top:398px;width:239px;height:12px;overflow:hidden;position:absolute">
<div class="t" style="left:3px;top:0px;">SHL EAX,<span style="color:#808000">2</span></div>
</div>
<div class="t" style="left:3px;top:410px;color:#6E6E6E;">0040135F</div>
<div class="t" style="left:63px;top:410px;">.  0FC8</div>
<div style="left:156px;top:410px;width:239px;height:12px;overflow:hidden;position:absolute">
<div class="t" style="left:3px;top:0px;">BSWAP EAX</div>
</div>
<div class="t" style="left:3px;top:422px;color:#6E6E6E;">00401361</div>
<div class="t" style="left:63px;top:422px;">.  35 78740000</div>
<div style="left:156px;top:422px;width:239px;height:12px;overflow:hidden;position:absolute">
<div class="t" style="left:3px;top:0px;">XOR EAX,<span style="color:#808000">7478</span></div>
</div>
</div>
<div style="left:76px;top:82px;width:2px;height:152px;background:#000;"></div>
<div style="left:76px;top:233px;width:5px;height:2px;background:#000;"></div>
<div style="left:76px;top:242px;width:5px;height:2px;background:#000;"></div>
<div style="left:76px;top:242px;width:2px;height:265px;background:#000;"></div>
<div style="left:418px;top:86px;width:5px;height:2px;background:#000;"></div>
<div style="left:418px;top:86px;width:2px;height:17px;background:#000;"></div>
<div style="left:418px;top:101px;width:5px;height:2px;background:#000;"></div>
<div style="left:418px;top:122px;width:5px;height:2px;background:#000;"></div>
<div style="left:418px;top:122px;width:2px;height:53px;background:#000;"></div>
<div style="left:418px;top:173px;width:5px;height:2px;background:#000;"></div>
<div style="left:418px;top:278px;width:5px;height:2px;background:#000;"></div>
<div style="left:418px;top:278px;width:2px;height:137px;background:#000;"></div>
<div style="left:418px;top:413px;width:5px;height:2px;background:#000;"></div>
<div class="strack" style="left:917px;top:66px;width:17px;height:441px"></div>
<div class="sbtn" style="left:917px;top:66px"><span class="up"></span></div>
<div class="sbtn" style="left:917px;top:157px"><span class="grip"></span></div>
<div class="sbtn" style="left:917px;top:490px"><span class="dn"></span></div>
<div style="left:18px;top:507px;width:917px;height:2px;background:#000;"></div>
<div style="left:934px;top:66px;width:2px;height:442px;background:#000;"></div>
<div style="left:18px;top:509px;width:917px;height:48px;background:#FFFBF0;"></div>
<div style="left:18px;top:509px;width:1px;height:48px;background:#808080;"></div>
<div style="left:934px;top:508px;width:2px;height:49px;background:#6E6E6E;"></div>
<div style="left:936px;top:66px;width:566px;height:491px;background:#FFFBF0;"></div>
<div style="left:936px;top:66px;width:566px;height:1px;background:#FFFFFF;"></div>
<div style="left:936px;top:67px;width:566px;height:14px;background:#B4B4B4;"></div>
<div style="left:936px;top:81px;width:566px;height:1px;background:#000;"></div>
<div style="left:1502px;top:66px;width:1px;height:491px;background:#000;"></div>
<div class="t" style="left:939px;top:69px;"><i>寄存器</i> (FPU)</div>
<svg style="position:absolute;left:1162px;top:69px" width="6" height="10"><path d="M4.5 0.5L0.5 4.5L4.5 8.5" stroke="#000" stroke-width="1" fill="none"/></svg>
<svg style="position:absolute;left:1192px;top:69px" width="6" height="10"><path d="M4.5 0.5L0.5 4.5L4.5 8.5" stroke="#000" stroke-width="1" fill="none"/></svg>
<svg style="position:absolute;left:1222px;top:69px" width="6" height="10"><path d="M4.5 0.5L0.5 4.5L4.5 8.5" stroke="#000" stroke-width="1" fill="none"/></svg>
<svg style="position:absolute;left:1252px;top:69px" width="6" height="10"><path d="M4.5 0.5L0.5 4.5L4.5 8.5" stroke="#000" stroke-width="1" fill="none"/></svg>
<svg style="position:absolute;left:1282px;top:69px" width="6" height="10"><path d="M4.5 0.5L0.5 4.5L4.5 8.5" stroke="#000" stroke-width="1" fill="none"/></svg>
<svg style="position:absolute;left:1312px;top:69px" width="6" height="10"><path d="M4.5 0.5L0.5 4.5L4.5 8.5" stroke="#000" stroke-width="1" fill="none"/></svg>
<svg style="position:absolute;left:1342px;top:69px" width="6" height="10"><path d="M4.5 0.5L0.5 4.5L4.5 8.5" stroke="#000" stroke-width="1" fill="none"/></svg>
<svg style="position:absolute;left:1372px;top:69px" width="6" height="10"><path d="M4.5 0.5L0.5 4.5L4.5 8.5" stroke="#000" stroke-width="1" fill="none"/></svg>
<svg style="position:absolute;left:1402px;top:69px" width="6" height="10"><path d="M4.5 0.5L0.5 4.5L4.5 8.5" stroke="#000" stroke-width="1" fill="none"/></svg>
<svg style="position:absolute;left:1432px;top:69px" width="6" height="10"><path d="M4.5 0.5L0.5 4.5L4.5 8.5" stroke="#000" stroke-width="1" fill="none"/></svg>
<svg style="position:absolute;left:1462px;top:69px" width="6" height="10"><path d="M4.5 0.5L0.5 4.5L4.5 8.5" stroke="#000" stroke-width="1" fill="none"/></svg>
<svg style="position:absolute;left:1492px;top:69px" width="6" height="10"><path d="M4.5 0.5L0.5 4.5L4.5 8.5" stroke="#000" stroke-width="1" fill="none"/></svg>
<div style="left:984px;top:238px;width:30px;height:12px;background:#B4B4B4;"></div>
<div class="t" style="left:939px;top:84px;color:#6E6E6E;">EAX 00000001</div>
<div class="t" style="left:939px;top:96px;color:#6E6E6E;">ECX 00000000</div>
<div class="t" style="left:939px;top:108px;color:#6E6E6E;">EDX 7C92E514 ntdll.KiFastSystemCallRet</div>
<div class="t" style="left:939px;top:120px;color:#6E6E6E;">EBX 00000000</div>
<div class="t" style="left:939px;top:132px;color:#6E6E6E;">ESP 0012FD60</div>
<div class="t" style="left:939px;top:144px;color:#6E6E6E;">EBP 0012FD6C</div>
<div class="t" style="left:939px;top:156px;color:#6E6E6E;">ESI 004010FE <i>反调试之</i>.004010FE</div>
<div class="t" style="left:939px;top:168px;color:#6E6E6E;">EDI 0012FDD4</div>
<div class="t" style="left:939px;top:186px;color:#6E6E6E;">EIP <span style="color:#FF0000">00401305</span> <i>反调试之</i>.00401305</div>
<div class="t" style="left:939px;top:204px;color:#6E6E6E;">C 0  ES 0023 32<i>位</i> 0(FFFFFFFF)</div>
<div class="t" style="left:939px;top:216px;color:#6E6E6E;">P 0  CS 001B 32<i>位</i> 0(FFFFFFFF)</div>
<div class="t" style="left:939px;top:228px;color:#6E6E6E;">A 0  SS 0023 32<i>位</i> 0(FFFFFFFF)</div>
<div class="t" style="left:939px;top:240px;color:#6E6E6E;">Z 0  DS 0023 32<i>位</i> 0(FFFFFFFF)</div>
<div class="t" style="left:939px;top:252px;color:#6E6E6E;">S 0  FS 003B 32<i>位</i> 7FFDF000(FFF)</div>
<div class="t" style="left:939px;top:264px;color:#6E6E6E;">T 0  GS 0000 NULL</div>
<div class="t" style="left:939px;top:276px;color:#6E6E6E;">D 0</div>
<div class="t" style="left:939px;top:288px;color:#6E6E6E;">O 0  LastErr ERROR_SUCCESS (00000000)</div>
<div class="t" style="left:939px;top:306px;color:#6E6E6E;">EFL 00000202 (NO,NB,NE,A,NS,PO,GE,G)</div>
<div class="t" style="left:939px;top:324px;color:#6E6E6E;">ST0 empty +UNORM 0081 00000081 BC4F3210</div>
<div class="t" style="left:939px;top:336px;color:#6E6E6E;">ST1 empty +UNORM 4624 00000027 F8879700</div>
<div class="t" style="left:939px;top:348px;color:#6E6E6E;">ST2 empty -UNORM A000 00000000 00400000</div>
<div class="t" style="left:939px;top:360px;color:#6E6E6E;">ST3 empty -UNORM F000 0012FFE0 00000000</div>
<div class="t" style="left:939px;top:372px;color:#6E6E6E;">ST4 empty -1.1589316302612143540e-2992</div>
<div class="t" style="left:939px;top:384px;color:#6E6E6E;">ST5 empty 1.0000000000000000000</div>
<div class="t" style="left:939px;top:396px;color:#6E6E6E;">ST6 empty 1.0000000000000000000</div>
<div class="t" style="left:939px;top:408px;color:#6E6E6E;">ST7 empty 1.0000000000000000000</div>
<div class="t" style="left:939px;top:420px;color:#6E6E6E;">               3 2 1 0      E S P U O Z D I</div>
<div class="t" style="left:939px;top:432px;color:#6E6E6E;">FST 4000  Cond 1 0 0 0  Err 0 0 0 0 0 0 0 0  (EQ)</div>
<div class="t" style="left:939px;top:444px;color:#6E6E6E;">FCW 027F  Prec NEAR,53  <i>掩码</i>    1 1 1 1 1 1</div>
<div style="left:18px;top:557px;width:1485px;height:2px;background:#6E6E6E;"></div>
<div style="left:19px;top:559px;width:668px;height:242px;background:#FFFBF0;"></div>
<div style="left:18px;top:559px;width:1px;height:242px;background:#808080;"></div>
<div style="left:19px;top:559px;width:651px;height:1px;background:#FFFFFF;"></div>
<div style="left:19px;top:560px;width:651px;height:13px;background:#B4B4B4;"></div>
<div style="left:19px;top:573px;width:651px;height:2px;background:#000;"></div>
<div style="left:72px;top:559px;width:1px;height:16px;background:#000;"></div>
<div style="left:73px;top:560px;width:1px;height:13px;background:#FFFFFF;"></div>
<div style="left:361px;top:559px;width:1px;height:16px;background:#000;"></div>
<div style="left:362px;top:560px;width:1px;height:13px;background:#FFFFFF;"></div>
<div style="left:462px;top:559px;width:1px;height:16px;background:#000;"></div>
<div style="left:463px;top:560px;width:1px;height:13px;background:#FFFFFF;"></div>
<div class="t" style="left:22px;top:561px;"><i>地址</i></div>
<div class="t" style="left:76px;top:561px;">HEX <i>数据</i></div>
<div class="t" style="left:364px;top:561px;">ASCII</div>
<div style="left:72px;top:575px;width:1px;height:226px;background:#808080;"></div>
<div style="left:361px;top:575px;width:1px;height:226px;background:#808080;"></div>
<div style="left:462px;top:575px;width:1px;height:226px;background:#808080;"></div>
<div style="left:144px;top:575px;width:1px;height:226px;background:#C0C0C0;"></div>
<div style="left:216px;top:575px;width:1px;height:226px;background:#C0C0C0;"></div>
<div style="left:288px;top:575px;width:1px;height:226px;background:#C0C0C0;"></div>
<div style="left:19px;top:575px;width:651px;height:226px;overflow:hidden">
<div class="t" style="left:3px;top:2px;color:#6E6E6E;">7FFDD000</div>
<div class="t" style="left:57px;top:2px;color:#6E6E6E;">00 00 01 00 FF FF FF FF 00 00 40 00 A0 1E 24 00</div>
<div style="left:344px;top:0px;width:100px;height:13px;overflow:hidden;position:absolute">
<div class="t" style="left:1px;top:2px;color:#6E6E6E;">..<b class="bx"></b>.        ..@.</div>
</div>
<div class="t" style="left:3px;top:14px;color:#6E6E6E;">7FFDD010</div>
<div class="t" style="left:57px;top:14px;color:#6E6E6E;">00 00 02 00 00 00 00 00 00 00 14 00 20 06 9A 7C</div>
<div style="left:344px;top:12px;width:100px;height:13px;overflow:hidden;position:absolute">
<div class="t" style="left:1px;top:2px;color:#6E6E6E;">..<b class="bx"></b>.......<b class="bx"></b>. <b class="bx"></b></div>
</div>
<div class="t" style="left:3px;top:26px;color:#6E6E6E;">7FFDD020</div>
<div class="t" style="left:57px;top:26px;color:#6E6E6E;">00 10 92 7C E0 10 92 7C 01 00 00 00 70 29 D1 77</div>
<div style="left:344px;top:24px;width:100px;height:13px;overflow:hidden;position:absolute">
<div class="t" style="left:1px;top:2px;color:#6E6E6E;">.<b class="bx"></b><i>拄</i>?<i>拄</i><b class="bx"></b>...p)<i>禘</i></div>
</div>
<div class="t" style="left:3px;top:38px;color:#6E6E6E;">7FFDD030</div>
<div class="t" style="left:57px;top:38px;color:#6E6E6E;">00 00 00 00 00 00 00 00 00 00 00 00 00 00 00 00</div>
<div style="left:344px;top:36px;width:100px;height:13px;overflow:hidden;position:absolute">
<div class="t" style="left:1px;top:2px;color:#6E6E6E;">................</div>
</div>
<div class="t" style="left:3px;top:50px;color:#6E6E6E;">7FFDD040</div>
<div class="t" style="left:57px;top:50px;color:#6E6E6E;">E0 05 9A 7C FF FF 0F 00 00 00 00 00 00 00 6F 7F</div>
<div style="left:344px;top:48px;width:100px;height:13px;overflow:hidden;position:absolute">
<div class="t" style="left:1px;top:2px;color:#6E6E6E;">?<i>趺</i>    <b class="bx"></b>........</div>
</div>
<div class="t" style="left:3px;top:62px;color:#6E6E6E;">7FFDD050</div>
<div class="t" style="left:57px;top:62px;color:#6E6E6E;">00 00 6F 7F 88 06 6F 7F 00 00 FA 7F 00 00 FA 7F</div>
<div style="left:344px;top:60px;width:100px;height:13px;overflow:hidden;position:absolute">
<div class="t" style="left:1px;top:2px;color:#6E6E6E;">..o ?o ..?..?</div>
</div>
<div class="t" style="left:3px;top:74px;color:#6E6E6E;">7FFDD060</div>
<div class="t" style="left:57px;top:74px;color:#6E6E6E;">00 10 FD 7F 01 00 00 00 70 00 00 00 00 00 00 00</div>
<div style="left:344px;top:72px;width:100px;height:13px;overflow:hidden;position:absolute">
<div class="t" style="left:1px;top:2px;color:#6E6E6E;">.<b class="bx"></b>?<b class="bx"></b>...p.......</div>
</div>
<div class="t" style="left:3px;top:86px;color:#6E6E6E;">7FFDD070</div>
<div class="t" style="left:57px;top:86px;color:#6E6E6E;">00 80 9B 07 6D E8 FF FF 00 00 10 00 00 20 00 00</div>
<div style="left:344px;top:84px;width:100px;height:13px;overflow:hidden;position:absolute">
<div class="t" style="left:1px;top:2px;color:#6E6E6E;">.€?m?  ..<b class="bx"></b>......</div>
</div>
<div class="t" style="left:3px;top:98px;color:#6E6E6E;">7FFDD080</div>
<div class="t" style="left:57px;top:98px;color:#6E6E6E;">00 00 01 00 00 10 00 00 06 00 00 00 10 00 00 00</div>
<div style="left:344px;top:96px;width:100px;height:13px;overflow:hidden;position:absolute">
<div class="t" style="left:1px;top:2px;color:#6E6E6E;">..<b class="bx"></b>..<b class="bx"></b>..<b class="bx"></b>...<b class="bx"></b></div>
</div>
<div class="t" style="left:3px;top:110px;color:#6E6E6E;">7FFDD090</div>
<div class="t" style="left:57px;top:110px;color:#6E6E6E;">E0 FF 99 7C 00 00 4E 00 00 00 00 00 14 00 00 00</div>
<div style="left:344px;top:108px;width:100px;height:13px;overflow:hidden;position:absolute">
<div class="t" style="left:1px;top:2px;color:#6E6E6E;">?<i>撾</i>..N.....<b class="bx"></b>...</div>
</div>
<div class="t" style="left:3px;top:122px;color:#6E6E6E;">7FFDD0A0</div>
<div class="t" style="left:57px;top:122px;color:#6E6E6E;">74 E1 99 7C 05 00 00 00 01 00 00 00 28 0A 00 03</div>
<div style="left:344px;top:120px;width:100px;height:13px;overflow:hidden;position:absolute">
<div class="t" style="left:1px;top:2px;color:#6E6E6E;">t<i>鴈</i>|<b class="bx"></b>...<b class="bx"></b>...(.</div>
</div>
<div class="t" style="left:3px;top:134px;color:#6E6E6E;">7FFDD0B0</div>
<div class="t" style="left:57px;top:134px;color:#6E6E6E;">02 00 00 00 02 00 00 00 04 00 00 00 00 00 00 00</div>
<div style="left:344px;top:132px;width:100px;height:13px;overflow:hidden;position:absolute">
<div class="t" style="left:1px;top:2px;color:#6E6E6E;"><b class="bx"></b>...<b class="bx"></b>...<b class="bx"></b>.......</div>
</div>
<div class="t" style="left:3px;top:146px;color:#6E6E6E;">7FFDD0C0</div>
<div class="t" style="left:57px;top:146px;color:#6E6E6E;">00 00 00 00 00 00 00 00 00 00 00 00 00 00 00 00</div>
<div style="left:344px;top:144px;width:100px;height:13px;overflow:hidden;position:absolute">
<div class="t" style="left:1px;top:2px;color:#6E6E6E;">................</div>
</div>
<div class="t" style="left:3px;top:158px;color:#6E6E6E;">7FFDD0D0</div>
<div class="t" style="left:57px;top:158px;color:#6E6E6E;">01 00 00 00 00 00 00 00 00 00 00 00 00 00 00 00</div>
<div style="left:344px;top:156px;width:100px;height:13px;overflow:hidden;position:absolute">
<div class="t" style="left:1px;top:2px;color:#6E6E6E;"><b class="bx"></b>...............</div>
</div>
<div class="t" style="left:3px;top:170px;color:#6E6E6E;">7FFDD0E0</div>
<div class="t" style="left:57px;top:170px;color:#6E6E6E;">00 00 00 00 00 00 00 00 00 00 00 00 00 00 00 00</div>
<div style="left:344px;top:168px;width:100px;height:13px;overflow:hidden;position:absolute">
<div class="t" style="left:1px;top:2px;color:#6E6E6E;">................</div>
</div>
<div class="t" style="left:3px;top:182px;color:#6E6E6E;">7FFDD0F0</div>
<div class="t" style="left:57px;top:182px;color:#6E6E6E;">00 00 00 00 00 00 00 00 00 00 00 00 00 00 00 00</div>
<div style="left:344px;top:180px;width:100px;height:13px;overflow:hidden;position:absolute">
<div class="t" style="left:1px;top:2px;color:#6E6E6E;">................</div>
</div>
<div class="t" style="left:3px;top:194px;color:#6E6E6E;">7FFDD100</div>
<div class="t" style="left:57px;top:194px;color:#6E6E6E;">00 00 00 00 00 00 00 00 00 00 00 00 00 00 00 00</div>
<div style="left:344px;top:192px;width:100px;height:13px;overflow:hidden;position:absolute">
<div class="t" style="left:1px;top:2px;color:#6E6E6E;">................</div>
</div>
<div class="t" style="left:3px;top:206px;color:#6E6E6E;">7FFDD110</div>
<div class="t" style="left:57px;top:206px;color:#6E6E6E;">00 00 00 00 00 00 00 00 00 00 00 00 00 00 00 00</div>
<div style="left:344px;top:204px;width:100px;height:13px;overflow:hidden;position:absolute">
<div class="t" style="left:1px;top:2px;color:#6E6E6E;">................</div>
</div>
<div class="t" style="left:3px;top:218px;color:#6E6E6E;">7FFDD120</div>
<div class="t" style="left:57px;top:218px;color:#6E6E6E;">44 11 04 1C 00 00 00 00 00 00 00 00 00 00 00 00</div>
<div style="left:344px;top:216px;width:100px;height:13px;overflow:hidden;position:absolute">
<div class="t" style="left:1px;top:2px;color:#6E6E6E;">D<b class="bx"></b><b class="bx"></b><b class="bx"></b>............</div>
</div>
</div>
<div class="strack" style="left:670px;top:559px;width:17px;height:242px"></div>
<div class="sbtn" style="left:670px;top:559px"><span class="up"></span></div>
<div class="sbtn" style="left:670px;top:576px"><span class="grip"></span></div>
<div class="sbtn" style="left:670px;top:784px"><span class="dn"></span></div>
<div style="left:687px;top:557px;width:2px;height:244px;background:#6E6E6E;"></div>
<div style="left:689px;top:559px;width:813px;height:242px;background:#FFFBF0;"></div>
<div style="left:689px;top:559px;width:53px;height:12px;background:#000;"></div>
<div style="left:743px;top:559px;width:742px;height:12px;background:#B4B4B4;"></div>
<div style="left:742px;top:559px;width:1px;height:242px;background:#808080;"></div>
<div style="left:802px;top:559px;width:1px;height:242px;background:#808080;"></div>
<div class="t" style="left:691px;top:561px;color:#FFFFFF;">0012FD60</div>
<div class="t" style="left:751px;top:561px;color:#6E6E6E;">00000000</div>
<div class="t" style="left:691px;top:573px;color:#6E6E6E;">0012FD64</div>
<div class="t" style="left:751px;top:573px;color:#6E6E6E;">00000000</div>
<div class="t" style="left:691px;top:585px;color:#6E6E6E;">0012FD68</div>
<div class="t" style="left:751px;top:585px;color:#6E6E6E;">77D3E5BB</div>
<div class="t" style="left:805px;top:585px;color:#6E6E6E;">user32.77D3E5BB</div>
<div class="t" style="left:691px;top:597px;color:#6E6E6E;">0012FD6C</div>
<div class="t" style="left:751px;top:597px;color:#6E6E6E;">0012FD98</div>
<div class="t" style="left:691px;top:609px;color:#6E6E6E;">0012FD70</div>
<div class="t" style="left:751px;top:609px;color:#6E6E6E;">77D18734</div>
<div class="t" style="left:805px;top:609px;color:#6E6E6E;"><i>返回到</i> user32.77D18734</div>
<div class="t" style="left:691px;top:621px;color:#6E6E6E;">0012FD74</div>
<div class="t" style="left:751px;top:621px;color:#6E6E6E;">003A0492</div>
<div class="t" style="left:691px;top:633px;color:#6E6E6E;">0012FD78</div>
<div class="t" style="left:751px;top:633px;color:#6E6E6E;">00000110</div>
<div class="t" style="left:691px;top:645px;color:#6E6E6E;">0012FD7C</div>
<div class="t" style="left:751px;top:645px;color:#6E6E6E;">004E04E0</div>
<div class="t" style="left:691px;top:657px;color:#6E6E6E;">0012FD80</div>
<div class="t" style="left:751px;top:657px;color:#6E6E6E;">00000000</div>
<div class="t" style="left:691px;top:669px;color:#6E6E6E;">0012FD84</div>
<div class="t" style="left:751px;top:669px;color:#6E6E6E;">004010FE</div>
<div class="t" style="left:805px;top:669px;color:#6E6E6E;"><i>反调试之</i>.004010FE</div>
<div class="t" style="left:691px;top:681px;color:#6E6E6E;">0012FD88</div>
<div class="t" style="left:751px;top:681px;color:#6E6E6E;">DCBAABCD</div>
<div class="t" style="left:691px;top:693px;color:#6E6E6E;">0012FD8C</div>
<div class="t" style="left:751px;top:693px;color:#6E6E6E;">00000000</div>
<div class="t" style="left:691px;top:705px;color:#6E6E6E;">0012FD90</div>
<div class="t" style="left:751px;top:705px;color:#6E6E6E;">0012FDD4</div>
<div class="t" style="left:691px;top:717px;color:#6E6E6E;">0012FD94</div>
<div class="t" style="left:751px;top:717px;color:#6E6E6E;">004010FE</div>
<div class="t" style="left:805px;top:717px;color:#6E6E6E;"><i>反调试之</i>.004010FE</div>
<div class="t" style="left:691px;top:729px;color:#6E6E6E;">0012FD98</div>
<div class="t" style="left:751px;top:729px;color:#6E6E6E;">0012FE00</div>
<div class="t" style="left:691px;top:741px;color:#6E6E6E;">0012FD9C</div>
<div class="t" style="left:751px;top:741px;color:#6E6E6E;">77D18816</div>
<div class="t" style="left:805px;top:741px;color:#6E6E6E;"><i>返回到</i> user32.77D18816 <i>来自</i> user32.77D1870C</div>
<div class="t" style="left:691px;top:753px;color:#6E6E6E;">0012FDA0</div>
<div class="t" style="left:751px;top:753px;color:#6E6E6E;">004010FE</div>
<div class="t" style="left:805px;top:753px;color:#6E6E6E;"><i>反调试之</i>.004010FE</div>
<div class="t" style="left:691px;top:765px;color:#6E6E6E;">0012FDA4</div>
<div class="t" style="left:751px;top:765px;color:#6E6E6E;">003A0492</div>
<div class="t" style="left:691px;top:777px;color:#6E6E6E;">0012FDA8</div>
<div class="t" style="left:751px;top:777px;color:#6E6E6E;">00000110</div>
<div class="t" style="left:691px;top:789px;color:#6E6E6E;">0012FDAC</div>
<div class="t" style="left:751px;top:789px;color:#6E6E6E;">004E04E0</div>
<div style="left:746px;top:599px;width:5px;height:2px;background:#000;"></div>
<div style="left:746px;top:599px;width:2px;height:124px;background:#000;"></div>
<div style="left:746px;top:722px;width:5px;height:2px;background:#000;"></div>
<div style="left:746px;top:731px;width:5px;height:2px;background:#000;"></div>
<div style="left:746px;top:731px;width:2px;height:70px;background:#000;"></div>
<div class="strack" style="left:1485px;top:559px;width:17px;height:242px"></div>
<div class="sbtn" style="left:1485px;top:559px"><span class="up"></span></div>
<div class="sbtn" style="left:1485px;top:759px"><span class="grip"></span></div>
<div class="sbtn" style="left:1485px;top:784px"><span class="dn"></span></div>
<div style="left:18px;top:801px;width:1485px;height:2px;background:#6E6E6E;"></div>
<div style="left:18px;top:803px;width:1485px;height:1px;background:#FFFFFF;"></div>
<div style="left:18px;top:804px;width:1485px;height:2px;background:#9A9A9A;"></div>
<div style="left:1410px;top:806px;width:1px;height:15px;background:#8A8A8A;"></div>
<div style="left:1411px;top:806px;width:1px;height:15px;background:#FFFFFF;"></div>
<div style="left:1412px;top:806px;width:90px;height:14px;background:#FFFF00;border-radius:0 0 3px 0"></div>
<div class="st" style="left:1415px;top:806px">暂停</div>
<div style="left:545px;top:84px;width:130px;height:30px;background:#FCF5EA;border-radius:6px"></div>
<div class="note" style="left:553px;top:89px">提交退出消息</div>
<div style="left:18px;top:75px;width:520px;height:27px;border:3px solid #F00000;border-left:0;border-radius:0 2px 2px 0"></div>
</body></html>
